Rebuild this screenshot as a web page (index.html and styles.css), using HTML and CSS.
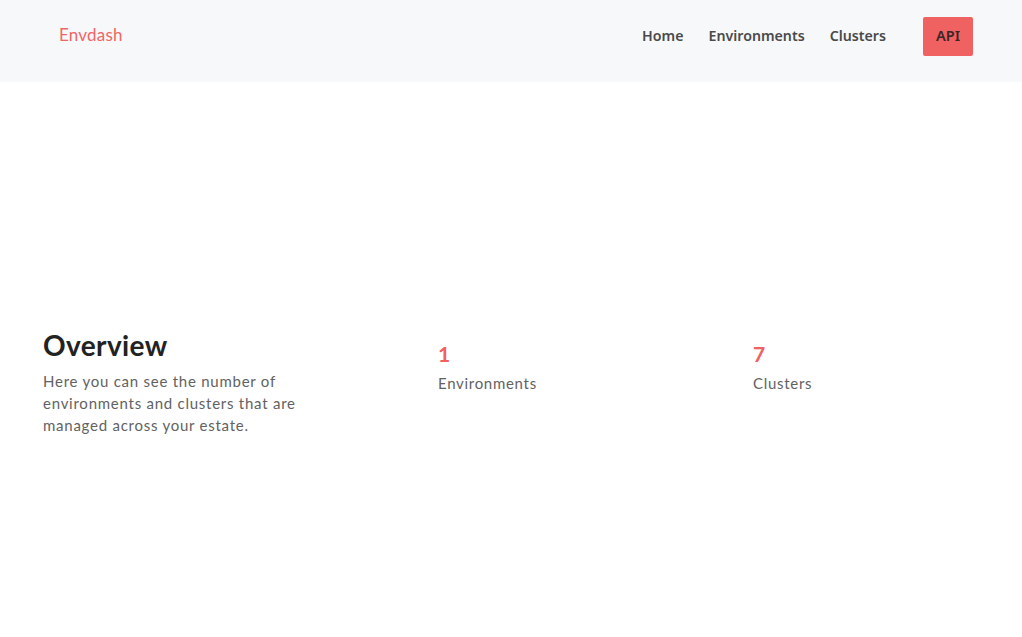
FILE: index.html
```html
<!DOCTYPE html>
<html lang="en">
<head>
<meta charset="utf-8">
<title>Envdash</title>
<link rel="stylesheet" href="styles.css">
</head>
<body>
<header class="topbar">
  <a class="brand" href="#">Envdash</a>
  <nav class="nav">
    <a class="nav-link" href="#">Home</a>
    <a class="nav-link" href="#">Environments</a>
    <a class="nav-link" href="#">Clusters</a>
    <a class="nav-button" href="#">API</a>
  </nav>
</header>
<main class="hero">
  <div class="overview">
    <div class="intro">
      <h1 class="title">Overview</h1>
      <p class="lead">Here you can see the number of environments and clusters that are managed across your estate.</p>
    </div>
    <div class="stat">
      <div class="stat-num">1</div>
      <div class="stat-label">Environments</div>
    </div>
    <div class="stat">
      <div class="stat-num">7</div>
      <div class="stat-label">Clusters</div>
    </div>
  </div>
</main>
</body>
</html>
```
FILE: styles.css
```css
* { box-sizing: border-box; }
html, body { margin: 0; padding: 0; }
body {
  font-family: "Lato", "Open Sans", sans-serif;
  background: #ffffff;
  color: #4a4a4a;
}
.topbar {
  height: 82px;
  background: #f7f8fa;
  display: flex;
  align-items: center;
  justify-content: space-between;
  padding: 0 49px 0 59px;
}
.brand {
  font-family: "Lato", sans-serif;
  font-size: 17px;
  color: #f26565;
  text-decoration: none;
  letter-spacing: 0.2px;
  margin-top: -13px;
}
.nav {
  display: flex;
  align-items: center;
  margin-top: -9px;
}
.nav-link {
  font-family: "Noto Sans", sans-serif;
  font-weight: 600;
  font-size: 14.2px;
  color: #4a4a4a;
  text-decoration: none;
  margin-right: 25px;
  position: relative;
  top: -1px;
}
.nav-link:nth-child(3) { margin-right: 37px; }
.nav-button {
  font-family: "Noto Sans", sans-serif;
  font-weight: 600;
  font-size: 14.5px;
  color: #3a2626;
  background: #f06161;
  text-decoration: none;
  width: 50px;
  height: 39px;
  padding-bottom: 3px;
  border-radius: 2px;
  display: flex;
  align-items: center;
  justify-content: center;
}
.hero {
  height: 555px;
  display: flex;
  align-items: center;
  padding: 0 43px;
}
.overview {
  width: 100%;
  display: grid;
  grid-template-columns: 395px 315px 1fr;
  margin-top: 44px;
}
.title {
  margin: 0;
  font-family: "Lato", sans-serif;
  font-size: 28px;
  font-weight: 700;
  color: #222222;
  line-height: 34px;
  letter-spacing: 0.4px;
}
.lead {
  margin: 8px 0 0;
  width: 270px;
  font-size: 15px;
  line-height: 22px;
  color: #626262;
  letter-spacing: 0.75px;
}
.stat { padding-top: 13px; }
.stat-num {
  font-size: 21px;
  font-weight: 700;
  color: #f26060;
  line-height: 26px;
}
.stat-label {
  margin-top: 6px;
  font-size: 15px;
  color: #626262;
  line-height: 20px;
  letter-spacing: 0.7px;
}
```
